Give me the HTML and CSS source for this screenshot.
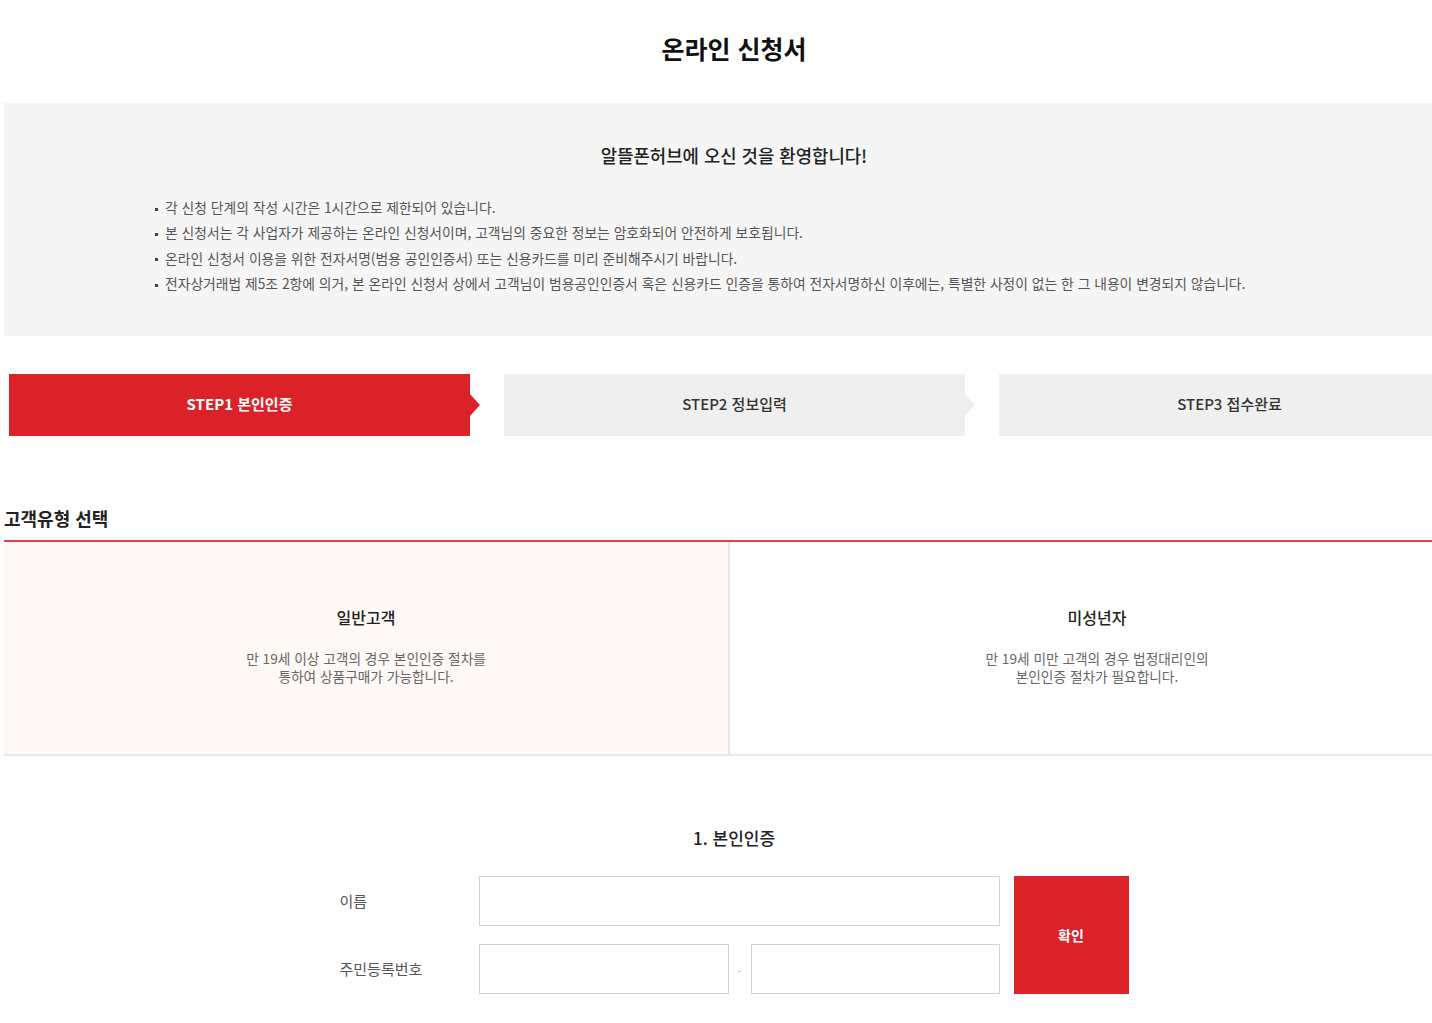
FILE: index.html
```html
<!DOCTYPE html>
<html lang="ko">
<head>
<meta charset="utf-8">
<title>온라인 신청서</title>
<link rel="stylesheet" href="styles.css">
</head>
<body>
<div class="page">
  <h1 class="page-title">온라인 신청서</h1>

  <section class="intro">
    <h2 class="intro-title">알뜰폰허브에 오신 것을 환영합니다!</h2>
    <ul class="intro-list">
      <li>각 신청 단계의 작성 시간은 1시간으로 제한되어 있습니다.</li>
      <li>본 신청서는 각 사업자가 제공하는 온라인 신청서이며, 고객님의 중요한 정보는 암호화되어 안전하게 보호됩니다.</li>
      <li>온라인 신청서 이용을 위한 전자서명(범용 공인인증서) 또는 신용카드를 미리 준비해주시기 바랍니다.</li>
      <li>전자상거래법 제5조 2항에 의거, 본 온라인 신청서 상에서 고객님이 범용공인인증서 혹은 신용카드 인증을 통하여 전자서명하신 이후에는, 특별한 사정이 없는 한 그 내용이 변경되지 않습니다.</li>
    </ul>
  </section>

  <ol class="steps">
    <li class="step step-active">STEP1 본인인증</li>
    <li class="step">STEP2 정보입력</li>
    <li class="step">STEP3 접수완료</li>
  </ol>

  <h3 class="section-title">고객유형 선택</h3>
  <div class="types">
    <div class="type type-selected">
      <strong class="type-name">일반고객</strong>
      <p class="type-desc">만 19세 이상 고객의 경우 본인인증 절차를<br>통하여 상품구매가 가능합니다.</p>
    </div>
    <div class="type">
      <strong class="type-name">미성년자</strong>
      <p class="type-desc">만 19세 미만 고객의 경우 법정대리인의<br>본인인증 절차가 필요합니다.</p>
    </div>
  </div>

  <h3 class="form-title">1. 본인인증</h3>
  <form class="auth-form">
    <label class="label label-name" for="name">이름</label>
    <input class="field field-name" id="name" type="text">
    <label class="label label-rrn" for="rrn1">주민등록번호</label>
    <input class="field field-rrn1" id="rrn1" type="text">
    <span class="dash">-</span>
    <input class="field field-rrn2" id="rrn2" type="password">
    <button class="confirm" type="button">확인</button>
  </form>
</div>
</body>
</html>
```

FILE: styles.css
```css
html, body {
  margin: 0;
  padding: 0;
  overflow: hidden;
  background: #fff;
}
body {
  font-family: "Noto Sans CJK KR", "Noto Sans KR", "Noto Sans", sans-serif;
  color: #333;
}
.page {
  width: 1460px;
  margin-left: 4px;
}
.page-title {
  margin: 0;
  padding: 30px 0 36px;
  font-size: 25px;
  line-height: 37px;
  font-weight: 700;
  color: #111;
  text-align: center;
}
.intro {
  background: #f5f5f5;
  padding: 39px 0 0 151px;
  height: 233px;
  box-sizing: border-box;
}
.intro-title {
  margin: 0 0 27px -151px;
  font-size: 17.8px;
  line-height: 26px;
  font-weight: 500;
  color: #222;
  text-align: center;
}
.intro-list {
  list-style: none;
  margin: 0;
  padding: 0;
}
.intro-list li {
  display: flex;
  align-items: center;
  font-size: 13.8px;
  line-height: 25.3px;
  color: #555;
  white-space: nowrap;
}
.intro-list li::before {
  content: "";
  width: 3px;
  height: 3px;
  background: #444;
  margin: 3px 7px 0 0;
  flex: none;
}
.steps {
  list-style: none;
  margin: 38px 0 0;
  padding: 0 4px 0 5px;
  display: flex;
  gap: 34px;
}
.step {
  position: relative;
  width: 461px;
  height: 62px;
  box-sizing: border-box;
  padding-bottom: 3px;
  display: flex;
  align-items: center;
  justify-content: center;
  background: #efefef;
  color: #333;
  font-size: 15px;
  font-weight: 500;
}
.step::after {
  content: "";
  position: absolute;
  left: 100%;
  top: 50%;
  margin-top: -11px;
  border-left: 10px solid #efefef;
  border-top: 11px solid transparent;
  border-bottom: 11px solid transparent;
}
.step-active {
  background: #dc2229;
  color: #fff;
  font-weight: 700;
}
.step-active::after {
  border-left-color: #dc2229;
}
.section-title {
  margin: 69px 0 0;
  padding-bottom: 9px;
  font-size: 18px;
  line-height: 26px;
  font-weight: 700;
  color: #222;
  border-bottom: 2px solid #e2434a;
}
.types {
  display: flex;
  border-bottom: 2px solid #e8e8e8;
}
.type {
  flex: 1 1 0;
  height: 212px;
  box-sizing: border-box;
  padding-bottom: 6px;
  display: flex;
  flex-direction: column;
  align-items: center;
  justify-content: center;
  text-align: center;
  background: #fff;
}
.type + .type {
  border-left: 2px solid #e6e6e6;
}
.type-selected {
  background: #fff9f6;
  flex: 0 0 724px;
}
.type-name {
  font-size: 16px;
  line-height: 24px;
  font-weight: 500;
  color: #222;
}
.type-desc {
  margin: 20px 0 0;
  font-size: 13.7px;
  line-height: 18px;
  color: #666;
}
.form-title {
  margin: 69px 0 0;
  font-size: 17px;
  line-height: 26px;
  font-weight: 500;
  color: #222;
  text-align: center;
}
.auth-form {
  margin: 25px auto 0;
  width: 789px;
  display: grid;
  grid-template-columns: 139px 250px 22px 249px 14px 115px;
  grid-template-rows: 50px 50px;
  row-gap: 18px;
}
.label {
  font-size: 15px;
  color: #555;
  display: flex;
  align-items: center;
  padding-bottom: 2px;
}
.label-name { grid-column: 1; grid-row: 1; }
.label-rrn { grid-column: 1; grid-row: 2; }
.field {
  box-sizing: border-box;
  height: 50px;
  border: 1px solid #d2d2d2;
  background: #fff;
  margin: 0;
  padding: 0 12px;
  font: inherit;
}
.field-name { grid-column: 2 / 5; grid-row: 1; }
.field-rrn1 { grid-column: 2; grid-row: 2; }
.field-rrn2 { grid-column: 4; grid-row: 2; }
.dash {
  grid-column: 3;
  grid-row: 2;
  display: flex;
  align-items: center;
  justify-content: center;
  font-size: 10px;
  color: #aaa;
  padding-top: 3px;
}
.confirm {
  grid-column: 6;
  grid-row: 1 / 3;
  border: 0;
  background: #dc2229;
  color: #fff;
  font: inherit;
  font-size: 14px;
  font-weight: 700;
  cursor: pointer;
}
```
